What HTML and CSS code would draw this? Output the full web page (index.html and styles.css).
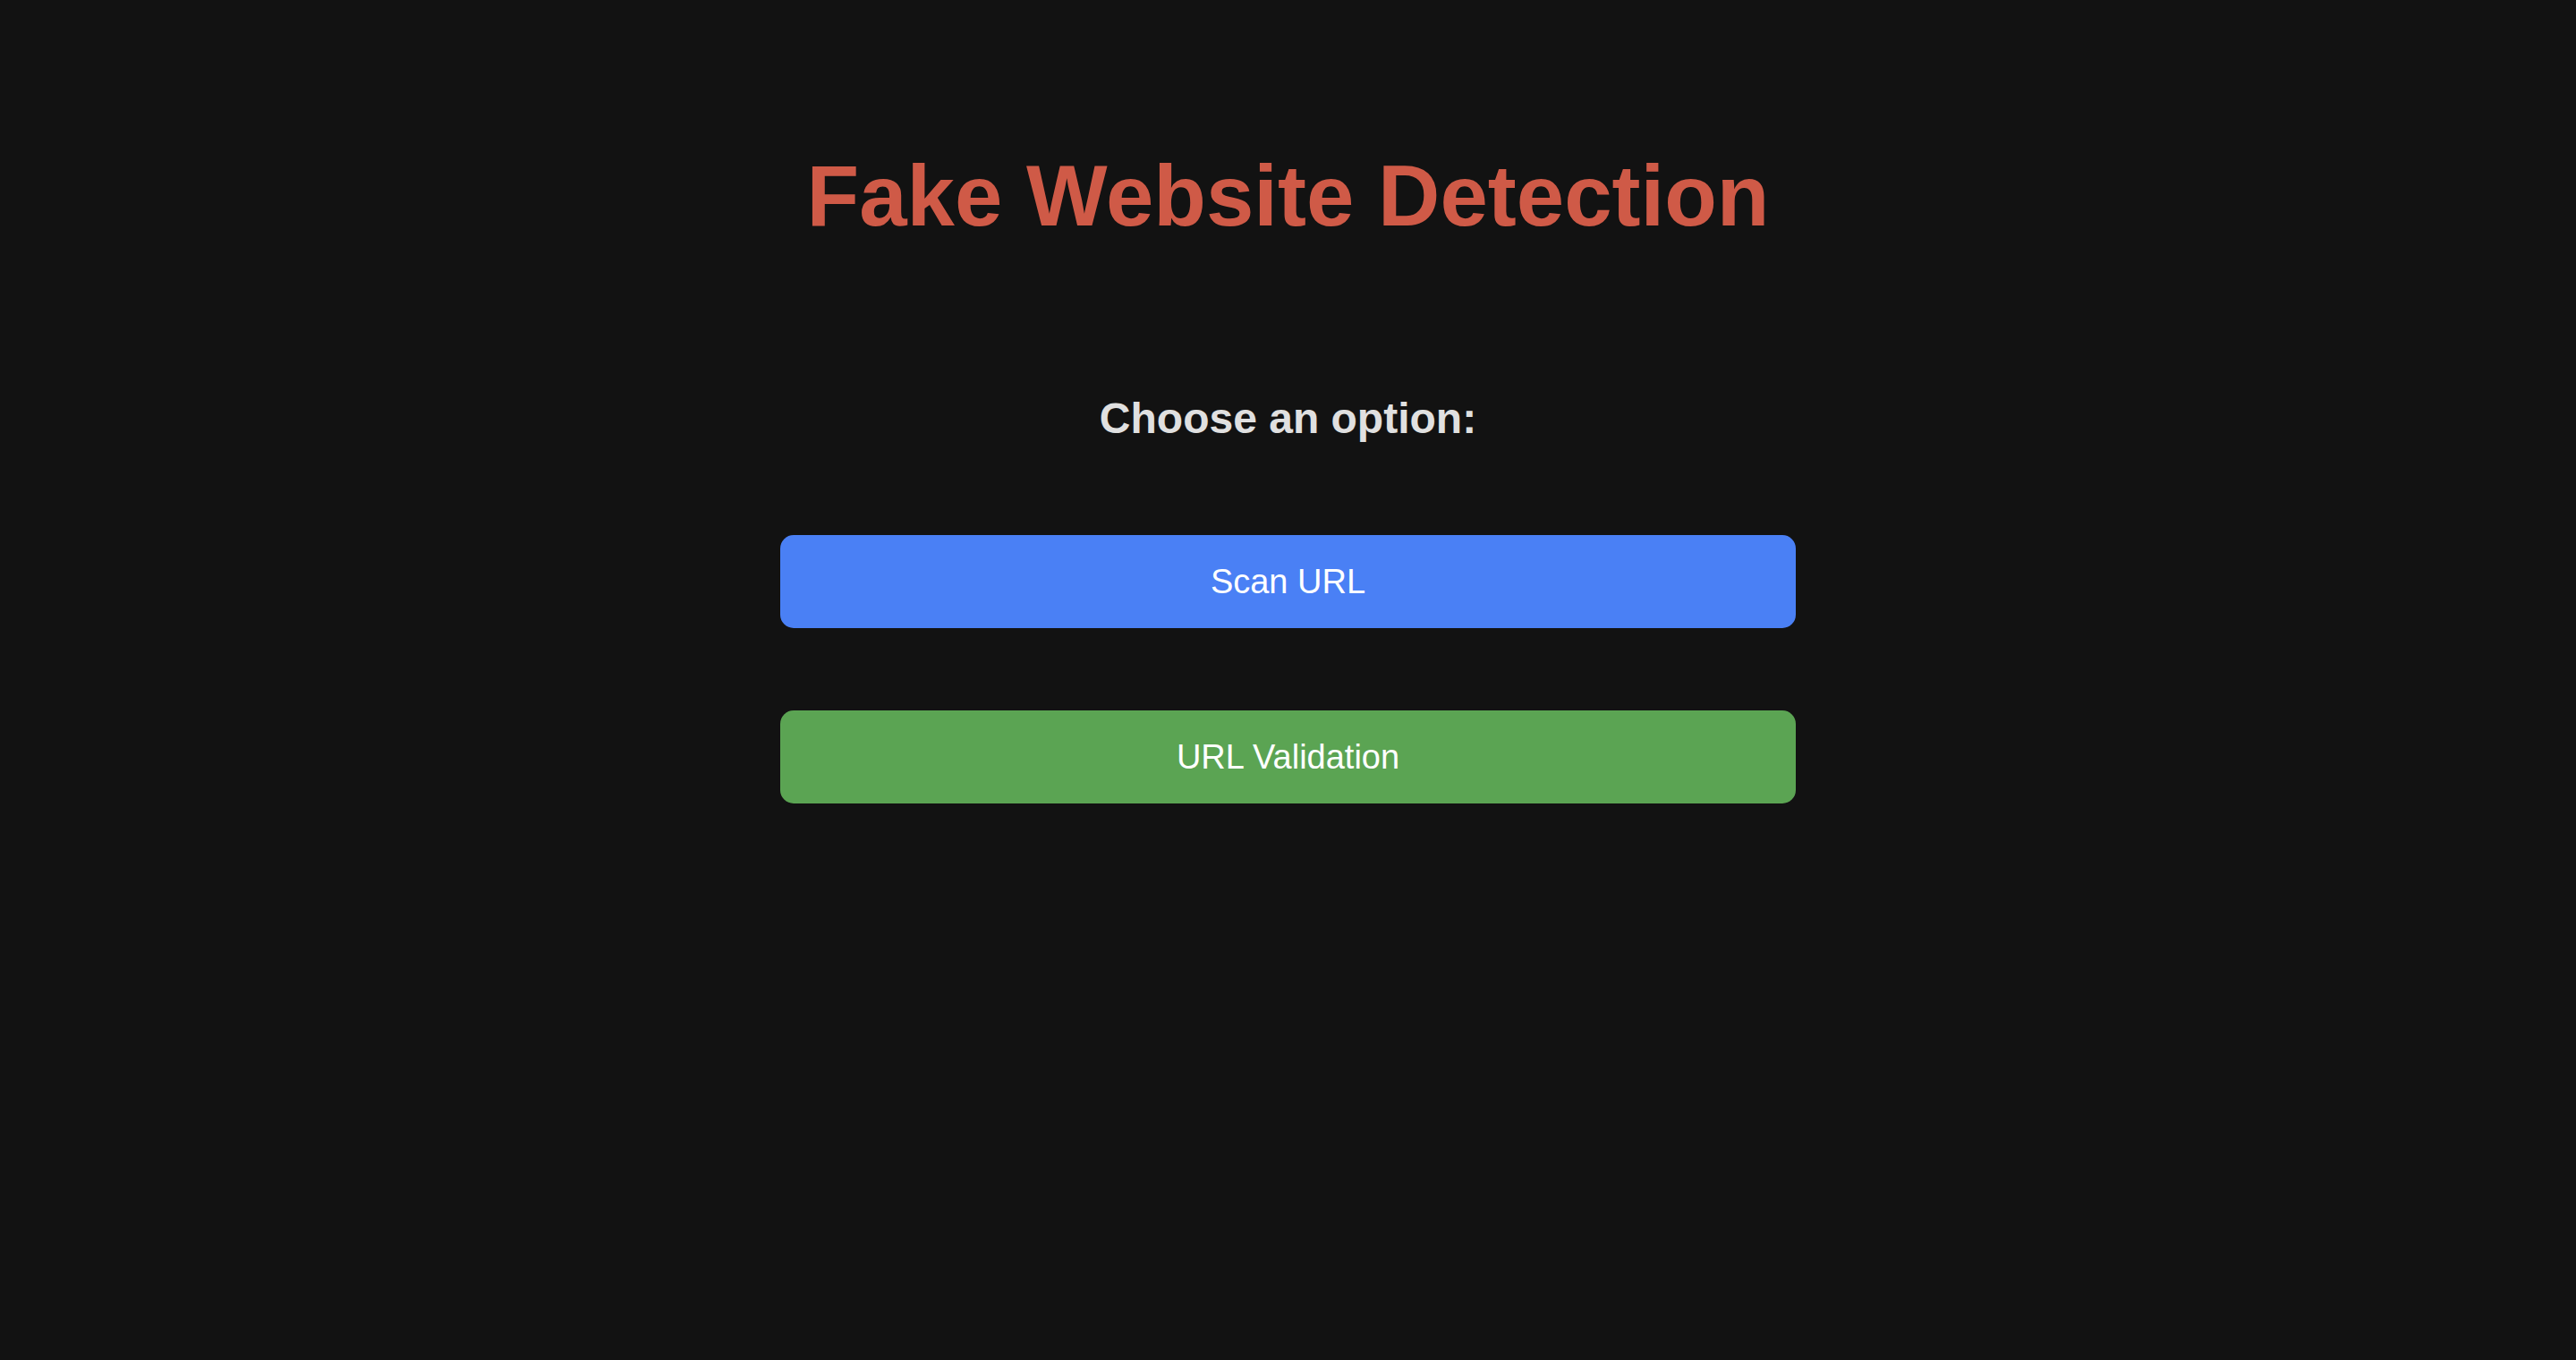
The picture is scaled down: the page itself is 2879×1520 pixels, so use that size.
FILE: index.html
```html
<!DOCTYPE html>
<html lang="en">
<head>
<meta charset="utf-8">
<title>Fake Website Detection</title>
<link rel="stylesheet" href="styles.css">
</head>
<body>
<main class="page">
  <h1 class="title">Fake Website Detection</h1>
  <h2 class="subtitle">Choose an option:</h2>
  <div class="options">
    <button class="btn btn-scan" type="button">Scan URL</button>
    <button class="btn btn-validate" type="button">URL Validation</button>
  </div>
</main>
</body>
</html>
```
FILE: styles.css
```css
html, body {
  margin: 0;
  padding: 0;
  background: #121212;
  height: 100%;
}
body {
  font-family: "Liberation Sans", Arial, sans-serif;
  color: #e0e0e0;
}
.page {
  display: flex;
  flex-direction: column;
  align-items: center;
  padding-top: 164px;
}
.title {
  margin: 0;
  font-size: 96px;
  font-weight: 700;
  line-height: normal;
  color: #cf5a47;
}
.subtitle {
  margin: 166px 0 0;
  font-size: 48px;
  font-weight: 700;
  line-height: normal;
  color: #e0e0e0;
}
.options {
  margin-top: 103px;
  display: flex;
  flex-direction: column;
  gap: 92px;
  width: 1135px;
}
.btn {
  display: block;
  width: 100%;
  height: 104px;
  border: none;
  border-radius: 15px;
  font-family: "Liberation Sans", Arial, sans-serif;
  font-size: 38px;
  line-height: 104px;
  padding: 0;
  color: #ffffff;
  cursor: pointer;
}
.btn-scan {
  background: #4a80f5;
}
.btn-validate {
  background: #5ba453;
}
```
